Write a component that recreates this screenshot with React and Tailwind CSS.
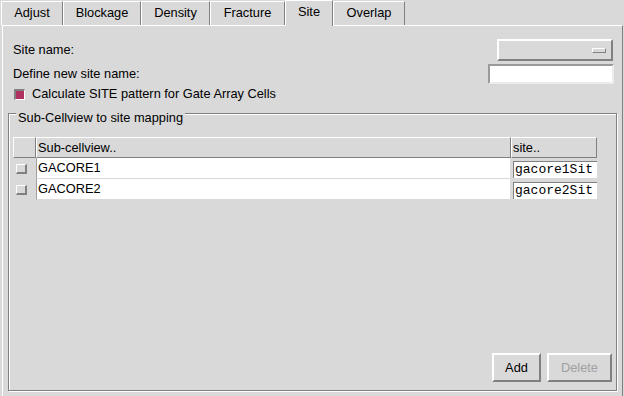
const tabs = [
  { label: "Adjust", width: "w-[62px]" },
  { label: "Blockage", width: "w-[78px]" },
  { label: "Density", width: "w-[69px]" },
  { label: "Fracture", width: "w-[75px]" },
  { label: "Site", width: "w-[48px]", active: true },
  { label: "Overlap", width: "w-[72px]" },
];

const rows = [
  { cell: "GACORE1", site: "gacore1Sit" },
  { cell: "GACORE2", site: "gacore2Sit" },
];

const raised = "border border-t-white border-l-white border-b-[#808080] border-r-[#808080]";
const raised2 = "border-2 border-t-white border-l-white border-b-[#808080] border-r-[#808080]";

const Tab = ({ label, width, active }) => {
  return (
    <div
      className={`${width} flex justify-center pt-[4px] border-t border-l border-r border-t-white border-l-white border-r-[#808080] ${
        active ? "h-[26px] -mb-px relative z-10 bg-[#d9d9d9]" : "h-[24px]"
      }`}
    >
      {label}
    </div>
  );
};

const App = () => {
  return (
    <div className="w-[624px] h-[396px] overflow-hidden bg-[#d9d9d9] text-black text-[12.8px] leading-[14px] font-['Liberation_Sans',Arial,sans-serif]">
      {/* Tab bar */}
      <div className="flex items-end pl-px">
        {tabs.map((t) => (
          <Tab key={t.label} {...t} />
        ))}
      </div>

      {/* Tab page */}
      <div className="ml-[2px] w-[621px] h-[380px] border-t border-l border-r border-t-white border-l-white border-r-[#808080]">
        {/* Site fields */}
        <div className="pl-[10px] pr-[8px] pt-[13px]">
          <div className="flex h-[22px] items-center justify-between">
            <span>Site name:</span>
            <div className={`mr-px flex h-[22px] w-[116px] items-center justify-end pr-[5px] ${raised2}`}>
              <div className={`h-[5px] w-[14px] ${raised}`} />
            </div>
          </div>
          <div className="mt-[3px] flex h-[20px] items-center justify-between">
            <span>Define new site name:</span>
            <div className="h-[20px] w-[126px] border-2 border-t-[#9a9a9a] border-l-[#9a9a9a] border-b-[#ececec] border-r-[#ececec] bg-white" />
          </div>
          <div className="mt-[3px] flex h-[14px] items-center">
            <div className="ml-px h-[11px] w-[11px] border-t-2 border-l-2 border-b border-r border-t-[#808080] border-l-[#808080] border-b-white border-r-white bg-[#b03060]" />
            <span className="ml-[7px]">Calculate SITE pattern for Gate Array Cells</span>
          </div>
        </div>

        {/* Sub-cellview group */}
        <div className="relative mt-[12px] ml-[5px] flex h-[278px] w-[609px] flex-col border border-[#808080] pl-[4px] pr-[4px] pt-[23px] pb-[8px] shadow-[inset_1px_1px_0_#fff,1px_1px_0_#fff]">
          <span className="absolute left-[7px] top-[-3px] bg-[#d9d9d9] px-[2px]">Sub-Cellview to site mapping</span>

          {/* Table header */}
          <div className="flex h-[21px]">
            <div className={`w-[23px] ${raised}`} />
            <div className={`flex w-[475px] items-center pl-px ${raised}`}>Sub-cellview..</div>
            <div className={`flex w-[86px] items-center pl-px ${raised}`}>site..</div>
          </div>

          {/* Table rows */}
          {rows.map((r) => (
            <div key={r.cell} className="flex h-[21px]">
              <div className="flex w-[23px] items-center pl-[3px]">
                <div className="h-[10px] w-[11px] border border-t-white border-l-white border-b-2 border-r-2 border-b-[#808080] border-r-[#808080]" />
              </div>
              <div className="flex w-[475px] items-center border-l border-b border-r border-l-[#a0a0a0] border-b-[#d9d9d9] border-r-[#d9d9d9] bg-white pl-px">
                {r.cell}
              </div>
              <div className="w-[86px] pl-[2px] pt-[3px]">
                <div className="h-[17px] w-[84px] border-t border-l border-[#808080] bg-white pl-px whitespace-nowrap text-[13px] leading-[16px] font-['Liberation_Mono',monospace]">
                  {r.site}
                </div>
              </div>
            </div>
          ))}

          {/* Buttons */}
          <div className="mt-auto flex justify-end gap-[6px]">
            <button className={`h-[29px] w-[49px] ${raised2}`}>Add</button>
            <button className={`h-[29px] w-[65px] text-[#a0a0a0] ${raised2}`}>Delete</button>
          </div>
        </div>
      </div>
    </div>
  );
};

export default App;
